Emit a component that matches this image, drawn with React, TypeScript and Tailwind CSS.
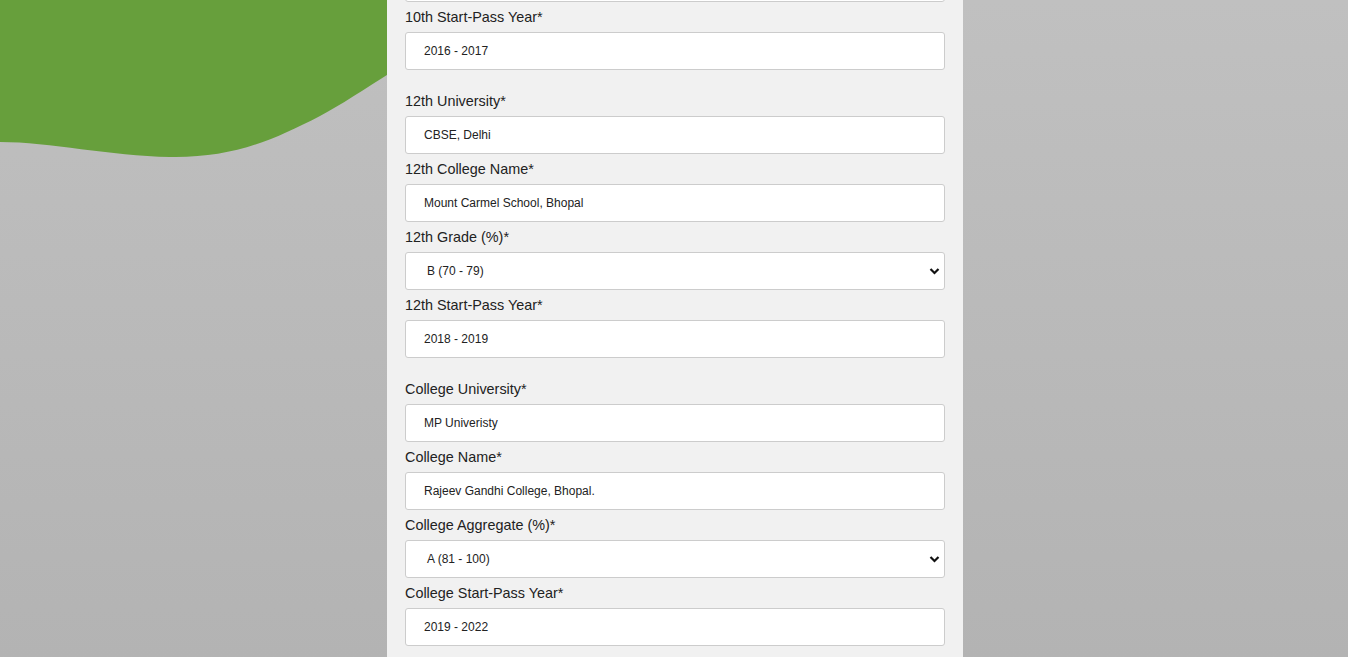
import React from "react";

type Field = {
  label: string;
  value: string;
  select?: boolean;
};

const groups: Field[][] = [
  [{ label: "10th Start-Pass Year*", value: "2016 - 2017" }],
  [
    { label: "12th University*", value: "CBSE, Delhi" },
    { label: "12th College Name*", value: "Mount Carmel School, Bhopal" },
    { label: "12th Grade (%)*", value: "B (70 - 79)", select: true },
    { label: "12th Start-Pass Year*", value: "2018 - 2019" },
  ],
  [
    { label: "College University*", value: "MP Univeristy" },
    { label: "College Name*", value: "Rajeev Gandhi College, Bhopal." },
    { label: "College Aggregate (%)*", value: "A (81 - 100)", select: true },
    { label: "College Start-Pass Year*", value: "2019 - 2022" },
  ],
];

const FormField = ({ field }: { field: Field }) => {
  return (
    <div className="flex flex-col">
      <label className="mt-[5px] mb-[5px] text-[14.4px] leading-[20px] text-[#222]">
        {field.label}
      </label>
      {field.select ? (
        <div className="relative h-[38px] w-full rounded-[3px] border border-[#ccc] bg-white">
          <div className="flex h-full items-center pl-[21px] text-[12px] text-[#222]">
            {field.value}
          </div>
          <svg
            className="absolute right-[4px] top-[13px]"
            width="11"
            height="10"
            viewBox="0 0 11 10"
          >
            <polyline
              points="1.5,3 5.5,7 9.5,3"
              fill="none"
              stroke="#111"
              strokeWidth="2.2"
            />
          </svg>
        </div>
      ) : (
        <input
          readOnly
          value={field.value}
          className="h-[38px] w-full rounded-[3px] border border-[#ccc] bg-white pl-[18px] text-[12px] text-[#222] outline-none"
        />
      )}
    </div>
  );
};

const App = () => {
  return (
    <div
      className="relative flex h-[657px] w-full justify-center overflow-hidden bg-gradient-to-b from-[#c0c0c0] to-[#b3b3b3] pl-[2px]"
      style={{ fontFamily: '"Liberation Sans", Arial, sans-serif' }}
    >
      <svg
        className="absolute left-0 top-0"
        width="480"
        height="170"
        viewBox="0 0 480 170"
      >
        <path
          d="M0 0 H480 V20 C420 50 360 95 320 116 C270 142 230 158 170 157 C110 156 50 142 0 142 Z"
          fill="#679f3c"
        />
      </svg>
      <div className="relative flex min-h-full w-[576px] flex-col bg-[#f1f1f1] px-[18px] pb-10">
        <div className="-mt-[36px] flex flex-col">
          <input
            readOnly
            value=""
            className="h-[38px] w-full rounded-[3px] border border-[#ccc] bg-white outline-none"
          />
        </div>
        {groups.map((group, gi) => (
          <div key={gi} className={gi > 0 ? "mt-[16px] flex flex-col" : "flex flex-col"}>
            {group.map((f) => (
              <FormField key={f.label} field={f} />
            ))}
          </div>
        ))}
      </div>
    </div>
  );
};

export default App;
